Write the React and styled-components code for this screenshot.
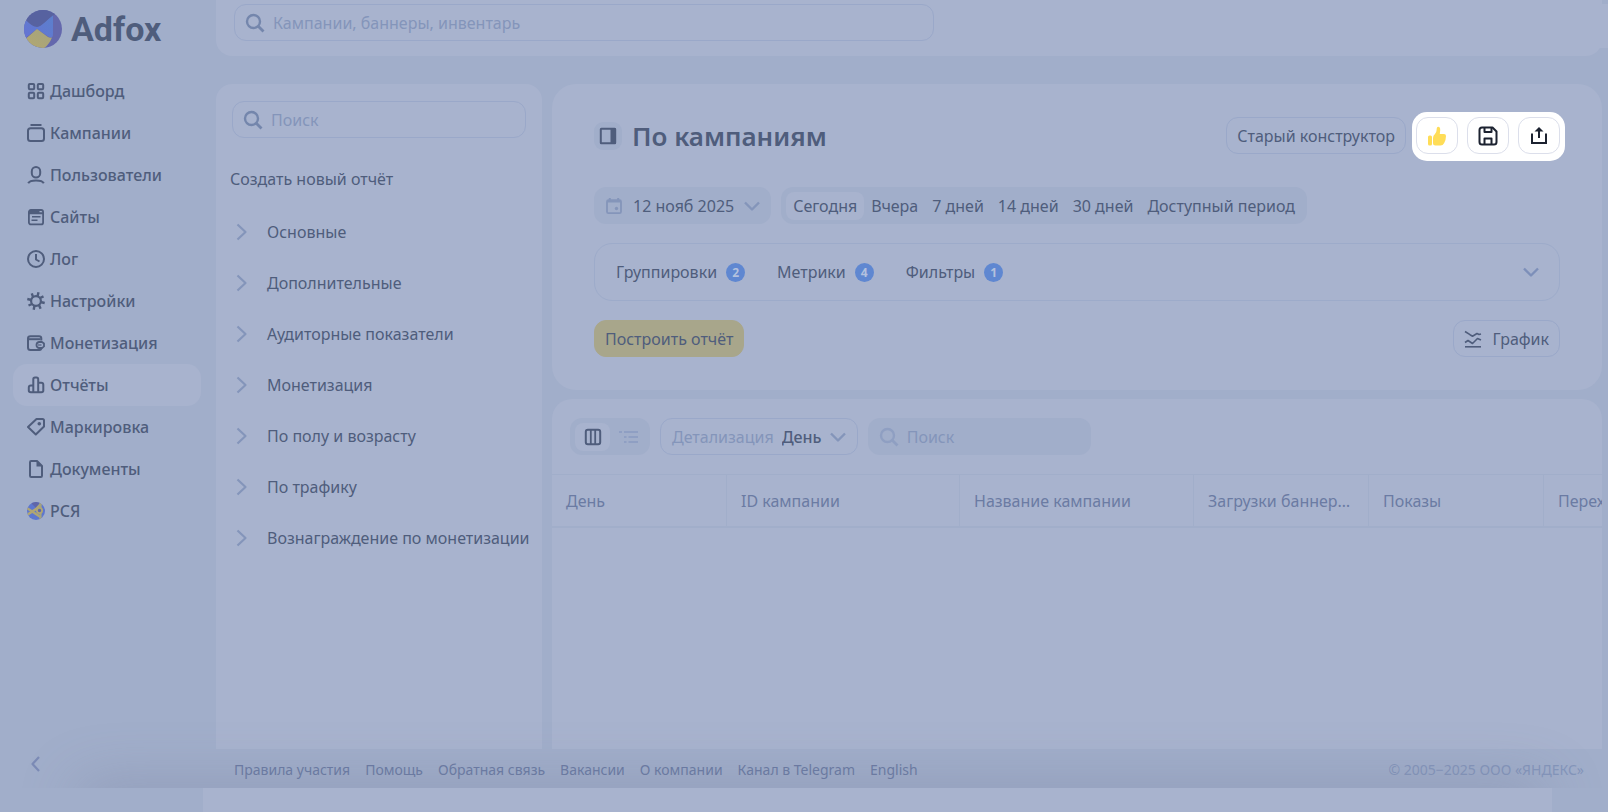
import styled, { createGlobalStyle } from 'styled-components';

const color = {
  page: '#a1aeca',
  panel: '#a8b3ce',
  text: '#4f5d7c',
  muted: '#6b7ba3',
  faint: '#8495ba',
  border: '#9aa8c9',
  divider: '#a1aeca',
  accent: '#5f87d1',
  yellow: '#a8a68b',
};

const GlobalStyle = createGlobalStyle`
* {
  margin: 0;
  padding: 0;
  box-sizing: border-box;
}

body, button, input, select {
  font-family: 'Noto Sans', 'Open Sans', sans-serif;
  font-size: 16px;
  line-height: 20px;
  color: ${color.text};
}

body {
  background: ${color.page};
}

button, input, select {
  border: 0;
  background: none;
  outline: none;
}

button {
  cursor: pointer;
  white-space: nowrap;
}

a {
  color: inherit;
  text-decoration: none;
}

svg {
  display: block;
  flex: none;
}
`;

const Page = styled.div`
  display: flex;
  flex-direction: column;
  height: 100vh;
  overflow: hidden;
`;

const Shell = styled.div`
  position: relative;
  display: flex;
  flex: 1;
  min-height: 0;
  overflow: hidden;

  &::after {
    content: '';
    position: absolute;
    left: 88px;
    right: 72px;
    bottom: -28px;
    height: 20px;
    border-radius: 20px;
    box-shadow: 0 0 56px 12px rgba(110, 120, 150, 0.36);
    pointer-events: none;
  }
`;

const Sidebar = styled.aside`
  display: flex;
  flex-direction: column;
  flex: none;
  width: 216px;
  padding: 10px 15px 13px 13px;
`;

const Logo = styled.a`
  display: flex;
  align-items: center;
  gap: 9px;
  height: 38px;
  margin: 0 0 22px 11px;
  font-family: 'Roboto', sans-serif;
  font-size: 34px;
  font-weight: 700;
  line-height: 38px;
`;

const NavItem = styled.a`
  display: flex;
  align-items: center;
  gap: 5px;
  height: 42px;
  padding-left: 14px;
  border-radius: 14px;
  font-weight: 500;
  background: ${({ $active }) => ($active ? color.panel : 'transparent')};
`;

const Collapse = styled.button`
  margin-top: auto;
  margin-left: 14px;
  width: 18px;
  height: 22px;

  svg {
    color: #7c8bb6;
  }
`;

const Main = styled.div`
  display: flex;
  flex-direction: column;
  flex: 1;
  min-width: 0;
  padding-right: 6px;
`;

const Header = styled.header`
  display: flex;
  justify-content: space-between;
  height: 56px;
  padding: 4px 0 0 18px;
  margin-bottom: 28px;
  border-radius: 0 0 16px 16px;
  background: ${color.panel};
`;

const HeaderEdge = styled.div`
  width: 40px;
  height: 44px;
  margin-right: -6px;
  background: ${color.panel};
`;

const SearchBox = styled.label`
  display: flex;
  align-items: center;
  gap: 8px;
  width: ${({ $width }) => $width || '100%'};
  height: 37px;
  padding: 0 10px;
  border: 1px solid ${({ $filled }) => ($filled ? 'transparent' : color.border)};
  border-radius: 12px;
  background: ${({ $filled }) => ($filled ? color.page : 'transparent')};
  color: ${({ $filled }) => ($filled ? '#8f9fc2' : '#7486ac')};

  input {
    flex: 1;
    min-width: 0;
  }

  input::placeholder {
    color: ${color.faint};
    opacity: 1;
  }
`;

const Columns = styled.div`
  display: flex;
  flex: 1;
  gap: 10px;
  min-height: 0;
`;

const ReportsPanel = styled.section`
  flex: none;
  width: 326px;
  padding: 17px 16px;
  border-radius: 16px 16px 0 0;
  background: ${color.panel};
`;

const ReportsTitle = styled.h2`
  margin: 31px 0 17px -2px;
  font-size: 16px;
  font-weight: 400;
  line-height: 20px;
`;

const ReportGroup = styled.button`
  display: flex;
  align-items: center;
  gap: 15px;
  width: 100%;
  height: 51px;
  padding-left: 2px;

  svg {
    color: ${color.faint};
  }
`;

const Content = styled.div`
  display: flex;
  flex-direction: column;
  flex: 1;
  gap: 9px;
  min-width: 0;
`;

const SettingsPanel = styled.section`
  padding: 33px 42px;
  border-radius: 24px;
  background: ${color.panel};
`;

const Row = styled.div`
  display: flex;
  align-items: center;
  justify-content: ${({ $between }) => ($between ? 'space-between' : 'flex-start')};
  gap: 10px;
  margin-bottom: ${({ $bottom }) => $bottom || 0}px;
`;

const PanelToggle = styled.button`
  display: flex;
  align-items: center;
  justify-content: center;
  width: 28px;
  height: 28px;
  border-radius: 9px;
  background: ${color.page};
`;

const Title = styled.h1`
  font-size: 26px;
  font-weight: 600;
  line-height: 34px;
`;

const Button = styled.button`
  display: flex;
  align-items: center;
  gap: 10px;
  height: 37px;
  padding: 0 10px;
  border: 1px solid ${({ $primary }) => ($primary ? color.yellow : color.border)};
  border-radius: 12px;
  background: ${({ $primary }) => ($primary ? color.yellow : 'transparent')};
`;

const Spotlight = styled.div`
  display: flex;
  gap: 9px;
  margin: -5px -5px -7px -4px;
  padding: 5px 5px 7px 4px;
  border-radius: 15px;
  background: #fff;
`;

const IconButton = styled.button`
  display: flex;
  align-items: center;
  justify-content: center;
  width: 42px;
  height: 37px;
  border: 1px solid #dcdfeb;
  border-radius: 12px;
  color: #1c2230;
`;

const DateButton = styled.button`
  display: flex;
  align-items: center;
  gap: 10px;
  height: 37px;
  padding: 0 11px;
  border-radius: 12px;
  background: ${color.page};

  svg {
    color: ${color.faint};
  }
`;

const Presets = styled.div`
  display: flex;
  align-items: center;
  height: 37px;
  padding: 0 5px;
  border-radius: 12px;
  background: ${color.page};
`;

const Preset = styled.button`
  height: 28px;
  padding: 0 7px;
  border-radius: 8px;
  background: ${({ $active }) => ($active ? color.panel : 'transparent')};
`;

const FilterBar = styled.div`
  display: flex;
  align-items: center;
  gap: 32px;
  height: 58px;
  margin-bottom: 19px;
  padding: 0 20px 0 21px;
  border: 1px solid #9dabca;
  border-radius: 18px;

  > :last-child {
    margin-left: auto;
    color: #7d8fb9;
  }
`;

const Filter = styled.button`
  display: flex;
  align-items: center;
  gap: 9px;
`;

const Badge = styled.span`
  width: 19px;
  height: 19px;
  border-radius: 50%;
  background: ${color.accent};
  color: #b3c1de;
  font-size: 12px;
  font-weight: 700;
  line-height: 19px;
`;

const TablePanel = styled.section`
  flex: 1;
  min-height: 0;
  border-radius: 20px 20px 0 0;
  background: ${color.panel};
  overflow: hidden;
`;

const TableTools = styled.div`
  display: flex;
  align-items: center;
  gap: 10px;
  padding: 19px 18px;
`;

const ViewSwitch = styled.div`
  display: flex;
  align-items: center;
  height: 37px;
  padding: 0 5px;
  border-radius: 12px;
  background: ${color.page};
`;

const ViewButton = styled.button`
  display: flex;
  align-items: center;
  justify-content: center;
  width: 35px;
  height: 28px;
  border-radius: 8px;
  background: ${({ $active }) => ($active ? color.panel : 'transparent')};
  color: ${({ $active }) => ($active ? color.text : '#8f9fc3')};
`;

const SelectBox = styled.label`
  display: flex;
  align-items: center;
  gap: 8px;
  height: 37px;
  padding: 0 11px;
  border: 1px solid ${color.border};
  border-radius: 12px;
  color: ${color.faint};

  select {
    appearance: none;
    font-weight: 500;
  }
`;

const Table = styled.table`
  width: 1225px;
  border-collapse: separate;
  border-spacing: 0;
  table-layout: fixed;

  th {
    height: 54px;
    padding: 0 14px;
    border-top: 1px solid ${color.divider};
    border-right: 1px solid ${color.divider};
    border-bottom: 2px solid ${color.divider};
    color: ${color.muted};
    font-weight: 400;
    text-align: left;
    white-space: nowrap;
    overflow: hidden;
    text-overflow: ellipsis;
  }
`;

const Footer = styled.footer`
  display: flex;
  align-items: center;
  gap: 15px;
  flex: none;
  height: 39px;
  padding: 2px 18px 0;
  color: ${color.muted};
  font-size: 14px;
`;

const Copyright = styled.span`
  margin-left: auto;
  color: ${color.faint};
`;

const BottomStrip = styled.div`
  flex: none;
  height: 24px;
  margin: 0 56px 0 203px;
  background: ${color.panel};
`;

const Icon = ({ size = 18, children }) => (
  <svg
    width={size}
    height={size}
    viewBox={`0 0 ${size} ${size}`}
    fill='none'
    stroke='currentColor'
    strokeWidth='2'
    strokeLinejoin='round'
    aria-hidden='true'
  >
    {children}
  </svg>
);

const SearchIcon = () => (
  <Icon size={20}>
    <circle cx='8.5' cy='8.5' r='6.5' strokeWidth='2.4' />
    <path d='M13 13l5.500 5.500' strokeWidth='2.800' />
  </Icon>
);

const ChevronDown = () => (
  <Icon size={16}>
    <path d='M1 4.500l7 7 7-7' strokeWidth='2.400' />
  </Icon>
);

const ChevronRight = () => (
  <Icon>
    <path d='M3.500 1.500l8 7.500-8 7.500' strokeWidth='2.200' />
  </Icon>
);

const LogoMark = () => (
  <svg width='38' height='38' viewBox='0 0 38 38' aria-hidden='true'>
    <defs>
      <clipPath id='logo-clip'>
        <circle cx='19' cy='19' r='19' />
      </clipPath>
      <linearGradient id='logo-blue' x1='1' y1='0' x2='0' y2='1'>
        <stop offset='0' stopColor='#5b80cc' />
        <stop offset='1' stopColor='#6673d4' />
      </linearGradient>
      <linearGradient id='logo-yellow' x1='0' y1='1' x2='1' y2='0'>
        <stop offset='0' stopColor='#b3a86f' />
        <stop offset='1' stopColor='#a3a280' />
      </linearGradient>
    </defs>
    <g clipPath='url(#logo-clip)'>
      <path d='M0 0h38v38H0z' fill='#6468ad' />
      <path d='M0 0h38L29 5.500C22 11 18 17 13 17S5 13 2 10z' fill='#5762a0' />
      <path d='M29 5.500V24q0 5-4 3L13 19 0 29V9l2 1.500C6 14 9 17 13 17S22 11 29 5.500z' fill='url(#logo-blue)' />
      <path d='M2 28.500L13 19l11 8q2 1.200 4 .500Q25 35 19 39L6 35z' fill='url(#logo-yellow)' />
    </g>
  </svg>
);

const NetworkIcon = () => (
  <svg width='18' height='18' viewBox='0 0 18 18' aria-hidden='true'>
    <defs>
      <clipPath id='network-clip'>
        <circle cx='9' cy='9' r='9' />
      </clipPath>
    </defs>
    <g clipPath='url(#network-clip)'>
      <path d='M0 0h18v18H0z' fill='#5d77cf' />
      <path d='M3 0h10L9 6z' fill='#5f66a8' />
      <path d='M-1 5.500L13.500 15M0 13L9 7l5-5' stroke='#b0a673' strokeWidth='2.400' fill='none' />
      <path d='M13.500 0v18' stroke='#a4a37f' strokeWidth='2.200' />
      <circle cx='12.500' cy='8.500' r='2.600' fill='#5f66a8' stroke='#b0a673' strokeWidth='1.800' />
    </g>
  </svg>
);

const NAV = [
  {
    label: 'Дашборд',
    icon: (
      <Icon>
        <rect x='1.800' y='1.900' width='5.400' height='5.400' rx='1' />
        <rect x='10.800' y='1.900' width='5.400' height='5.400' rx='1' />
        <rect x='1.800' y='10.800' width='5.400' height='5.400' rx='1' />
        <rect x='10.800' y='10.800' width='5.400' height='5.400' rx='1' />
      </Icon>
    ),
  },
  {
    label: 'Кампании',
    icon: (
      <Icon>
        <rect x='1' y='4.200' width='16' height='12.800' rx='2.500' />
        <path d='M3.500 1h11' />
      </Icon>
    ),
  },
  {
    label: 'Пользователи',
    icon: (
      <Icon>
        <rect x='4.800' y='1' width='8.400' height='10.400' rx='4.200' />
        <path d='M1.200 17.300c1-2 4-2.800 7.800-2.800s6.800.8 7.800 2.800' />
      </Icon>
    ),
  },
  {
    label: 'Сайты',
    icon: (
      <Icon>
        <rect x='1.900' y='2' width='14.200' height='14.400' rx='2' strokeWidth='1.800' />
        <path d='M2 3.500h10.500M2 5.200h14' />
        <path d='M5 8.800h8.500M4.500 12.300h6' strokeWidth='1.600' />
      </Icon>
    ),
  },
  {
    label: 'Лог',
    icon: (
      <Icon>
        <circle cx='9' cy='9' r='8' />
        <path d='M9 4v5.500l3.500 2' />
      </Icon>
    ),
  },
  {
    label: 'Настройки',
    icon: (
      <Icon>
        <circle cx='9' cy='9' r='4.900' strokeWidth='2.200' />
        <path
          d='M10.500 4.500L11.500.3M6 5L4.800 1.300M4.500 8L.3 7M5 12l-3.500 1.500M7.500 13.500l-.8 4.200M12 13l1.600 3.700M13.500 10l4.200 1M13 6l3.500-1.700'
          strokeWidth='2.400'
        />
      </Icon>
    ),
  },
  {
    label: 'Монетизация',
    icon: (
      <Icon>
        <path d='M14.300 6.500V4.500q0-2.300-2.300-2.300H3.500Q1 2.200 1 4.500v9Q1 16 3.500 16h8.800q2 0 2-2' />
        <path d='M1 5.200h12.500' />
        <path d='M12 8h3l2 1.400v3L15 14h-3q-2.500-.5-2.500-3T12 8z' strokeWidth='1.800' />
        <path d='M11 11h3.500' strokeWidth='1.200' />
      </Icon>
    ),
  },
  {
    label: 'Отчёты',
    active: true,
    icon: (
      <Icon>
        <path d='M6.300 16.200V3.200q0-1.700 1.700-1.700h1.500q1.700 0 1.700 1.700v13M6.300 9.500H3.800q-2 0-2 2v3q0 1.700 2 1.700h10.500q2 0 2-1.700V8.800q0-2-2-2h-3' />
      </Icon>
    ),
  },
  {
    label: 'Маркировка',
    icon: (
      <Icon>
        <path d='M9.500 1h6q1.500 0 1.500 1.500v6L8.800 16.500 1 9z' />
        <circle cx='12.300' cy='5.700' r='1.800' fill='currentColor' stroke='none' />
      </Icon>
    ),
  },
  {
    label: 'Документы',
    icon: (
      <Icon>
        <path d='M3 2.200Q3 1 4.200 1H10l5 5v9.800q0 1.200-1.200 1.200H4.200Q3 17 3 15.800z' />
        <path d='M9.500 1v5.500H15z' fill='currentColor' stroke='none' />
      </Icon>
    ),
  },
  { label: 'РСЯ', icon: <NetworkIcon /> },
];

const REPORT_GROUPS = [
  'Основные',
  'Дополнительные',
  'Аудиторные показатели',
  'Монетизация',
  'По полу и возрасту',
  'По трафику',
  'Вознаграждение по монетизации',
];

const PRESETS = ['Сегодня', 'Вчера', '7 дней', '14 дней', '30 дней', 'Доступный период'];

const FILTERS = [
  { label: 'Группировки', count: 2 },
  { label: 'Метрики', count: 4 },
  { label: 'Фильтры', count: 1 },
];

const TABLE_COLUMNS = [
  { label: 'День', width: 175 },
  { label: 'ID кампании', width: 233 },
  { label: 'Название кампании', width: 234 },
  { label: 'Загрузки баннеров', width: 175 },
  { label: 'Показы', width: 175 },
  { label: 'Переходы', width: 233 },
];

const FOOTER_LINKS = [
  'Правила участия',
  'Помощь',
  'Обратная связь',
  'Вакансии',
  'О компании',
  'Канал в Telegram',
  'English',
];

export default function App() {
  return (
    <>
      <GlobalStyle />
      <Page>
        <Shell>
          <Sidebar>
            <Logo href='#'>
              <LogoMark />
              Adfox
            </Logo>
            <nav>
              {NAV.map(({ label, icon, active }) => (
                <NavItem key={label} href='#' $active={active}>
                  {icon}
                  {label}
                </NavItem>
              ))}
            </nav>
            <Collapse aria-label='Свернуть меню'>
              <Icon>
                <path d='M12 2L5.500 9l6.500 7' strokeWidth='2.200' />
              </Icon>
            </Collapse>
          </Sidebar>
          <Main>
            <Header>
              <SearchBox $width='700px'>
                <SearchIcon />
                <input type='search' placeholder='Кампании, баннеры, инвентарь' />
              </SearchBox>
              <HeaderEdge />
            </Header>
            <Columns>
              <ReportsPanel>
                <SearchBox>
                  <SearchIcon />
                  <input type='search' placeholder='Поиск' />
                </SearchBox>
                <ReportsTitle>Создать новый отчёт</ReportsTitle>
                {REPORT_GROUPS.map((group) => (
                  <ReportGroup key={group}>
                    <ChevronRight />
                    {group}
                  </ReportGroup>
                ))}
              </ReportsPanel>
              <Content>
                <SettingsPanel>
                  <Row $between $bottom={33}>
                    <Row>
                      <PanelToggle aria-label='Панель отчётов'>
                        <Icon>
                          <rect x='1.800' y='1.800' width='14.400' height='14.400' rx='.5' />
                          <path d='M11.500 1.500H17v15h-5.500z' fill='currentColor' stroke='none' />
                        </Icon>
                      </PanelToggle>
                      <Title>По кампаниям</Title>
                    </Row>
                    <Row>
                      <Button>Старый конструктор</Button>
                      <Spotlight>
                        <IconButton aria-label='Оценить'>
                          <svg width='20' height='20' viewBox='0 0 20 20' fill='#ffdd57' aria-hidden='true'>
                            <rect x='1' y='9.500' width='4' height='10' rx='1.500' />
                            <path d='M6 12q0-2.500 2-4 1.500-1.500 1.600-4 .1-3.300 1.600-3.300 2 0 2 3.300L12.800 8H17q2 0 2 2 0 3.500-1.800 7-1.300 2.500-3.700 2.500h-5Q6 19.500 6 17z' />
                          </svg>
                        </IconButton>
                        <IconButton aria-label='Сохранить'>
                          <Icon size={20}>
                            <path d='M4 1.500h10.500l4 4V16q0 2.500-2.500 2.500H4q-2.500 0-2.500-2.500V4Q1.500 1.500 4 1.500z' />
                            <path d='M6.500 2v4h7V2M6.500 18v-5.500h7V18' />
                          </Icon>
                        </IconButton>
                        <IconButton aria-label='Экспорт'>
                          <Icon>
                            <path d='M2 6.500V16h14V6.500M9 11V3' strokeLinejoin='miter' />
                            <path d='M9 0l4.500 4.500h-9z' fill='currentColor' stroke='none' />
                          </Icon>
                        </IconButton>
                      </Spotlight>
                    </Row>
                  </Row>
                  <Row $bottom={19}>
                    <DateButton>
                      <Icon>
                        <rect x='2' y='3.200' width='14' height='13' rx='1.500' strokeWidth='1.800' />
                        <path d='M2 4.500h14M4.800 1v3M13.200 1v3' />
                        <circle cx='11.500' cy='11.500' r='1.700' fill='currentColor' stroke='none' />
                      </Icon>
                      12 нояб 2025
                      <ChevronDown />
                    </DateButton>
                    <Presets>
                      {PRESETS.map((preset, i) => (
                        <Preset key={preset} $active={i === 0}>
                          {preset}
                        </Preset>
                      ))}
                    </Presets>
                  </Row>
                  <FilterBar>
                    {FILTERS.map(({ label, count }) => (
                      <Filter key={label}>
                        {label}
                        <Badge>{count}</Badge>
                      </Filter>
                    ))}
                    <ChevronDown />
                  </FilterBar>
                  <Row $between>
                    <Button $primary>Построить отчёт</Button>
                    <Button>
                      <Icon>
                        <g strokeWidth='1.600'>
                          <path d='M1 1.500l5 3.200 2.500 1.500L13 3.500l2 1 2-.5' />
                          <path d='M1 12.500l3-2 4.500 3 5-5L17 10' />
                          <path d='M1 16.800h16' />
                        </g>
                      </Icon>
                      График
                    </Button>
                  </Row>
                </SettingsPanel>
                <TablePanel>
                  <TableTools>
                    <ViewSwitch>
                      <ViewButton $active aria-label='Таблица'>
                        <Icon>
                          <rect x='1.800' y='1.800' width='14.400' height='14.400' rx='2' />
                          <path d='M6.800 2v14M11.200 2v14' strokeWidth='1.800' />
                        </Icon>
                      </ViewButton>
                      <ViewButton aria-label='Дерево'>
                        <Icon size={20}>
                          <path d='M1 5h3M6 5h14M6 10h2.500M10.500 10H20M6 15h2.500M10.500 15H20' />
                        </Icon>
                      </ViewButton>
                    </ViewSwitch>
                    <SelectBox>
                      Детализация
                      <select>
                        <option>День</option>
                      </select>
                      <ChevronDown />
                    </SelectBox>
                    <SearchBox $filled $width='223px'>
                      <SearchIcon />
                      <input type='search' placeholder='Поиск' />
                    </SearchBox>
                  </TableTools>
                  <Table>
                    <colgroup>
                      {TABLE_COLUMNS.map(({ label, width }) => (
                        <col key={label} width={width} />
                      ))}
                    </colgroup>
                    <thead>
                      <tr>
                        {TABLE_COLUMNS.map(({ label }) => (
                          <th key={label} scope='col'>
                            {label}
                          </th>
                        ))}
                      </tr>
                    </thead>
                  </Table>
                </TablePanel>
              </Content>
            </Columns>
            <Footer>
              {FOOTER_LINKS.map((link) => (
                <a key={link} href='#'>
                  {link}
                </a>
              ))}
              <Copyright>© 2005−2025 ООО «ЯНДЕКС»</Copyright>
            </Footer>
          </Main>
        </Shell>
        <BottomStrip />
      </Page>
    </>
  );
}
